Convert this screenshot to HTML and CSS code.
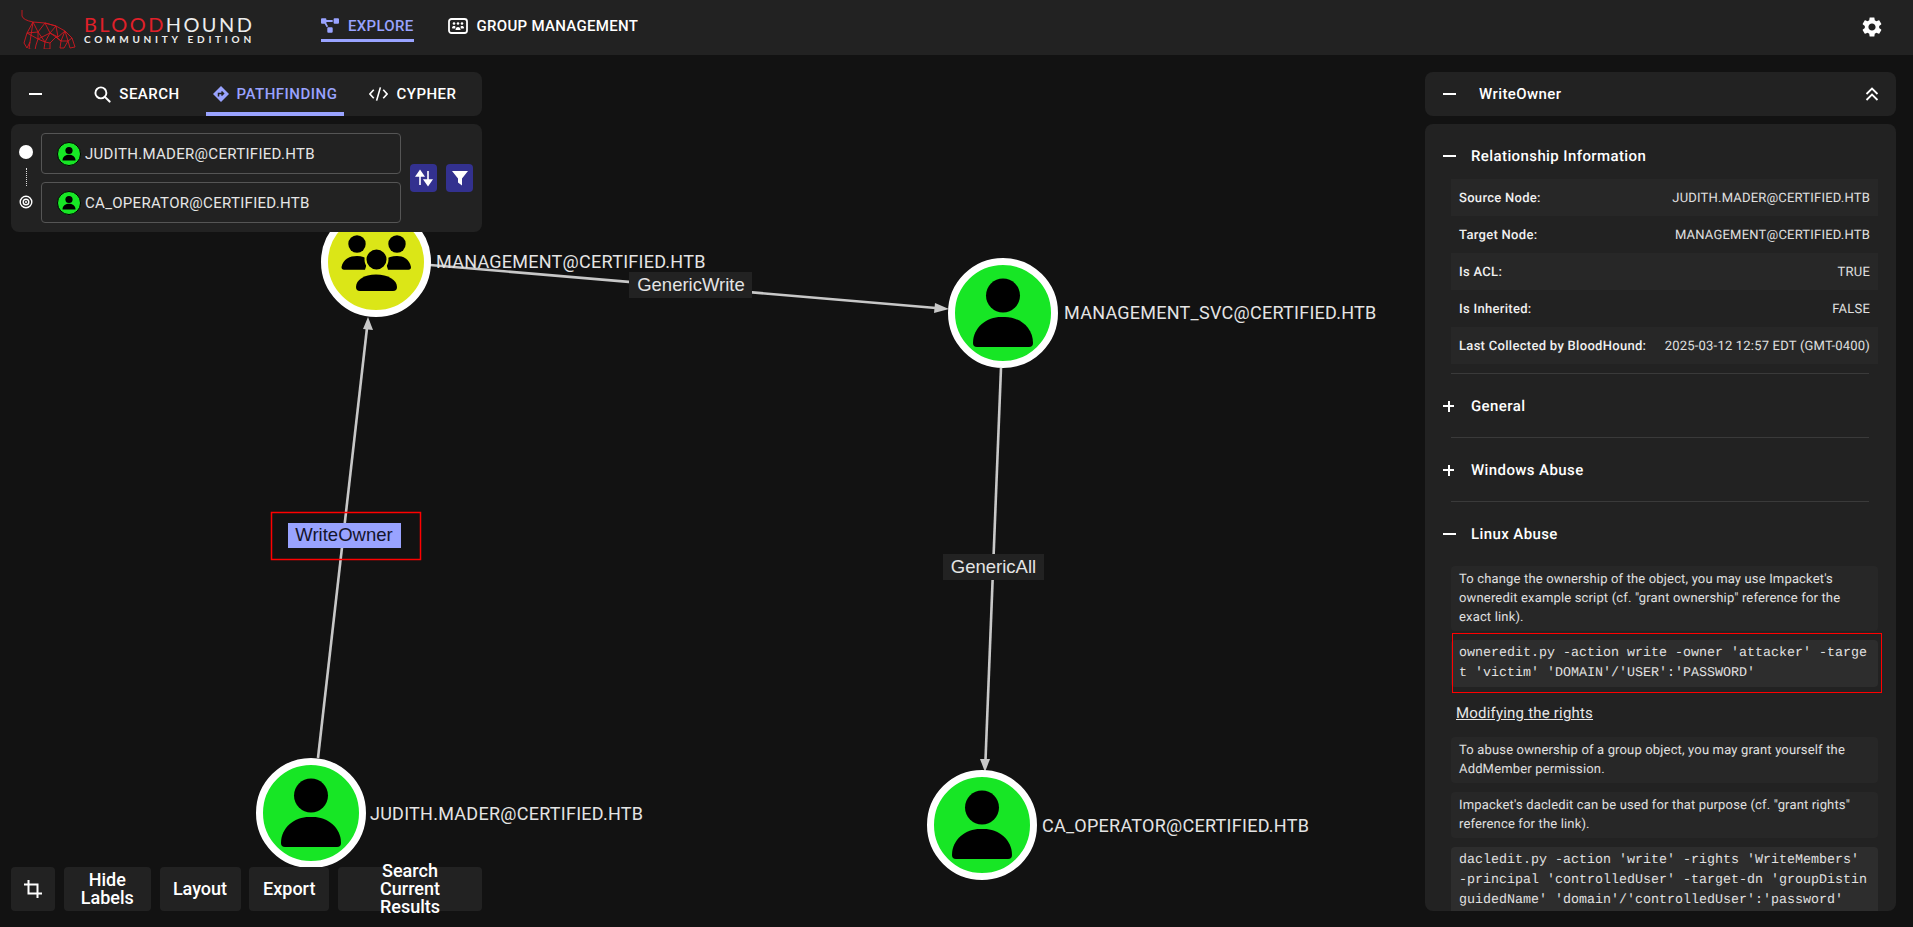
FILE: index.html
```html
<!DOCTYPE html>
<html lang="en">
<head>
<meta charset="utf-8">
<title>BloodHound Community Edition</title>
<link rel="stylesheet" href="styles.css">
</head>
<body>
<div class="app">
  <svg class="graph" viewBox="0 0 1913 927" width="1913" height="927">
    <defs>
      <g id="user">
        <circle cx="0" cy="-17.5" r="17"/>
        <path d="M-30 30C-30 14-16 4-2 4H2C16 4 30 14 30 30Q30 34 26 34H-26Q-30 34-30 30Z"/>
      </g>
      <g id="group">
        <circle cx="-19" cy="-18" r="8.7"/>
        <circle cx="21" cy="-18" r="8.7"/>
        <path d="M-34.500 5C-33 -3-26 -6-19 -6C-14 -6-11 -5-8 -2L-11 7.700H-32Q-34.500 7.700-34.500 5Z"/>
        <path d="M35 5C33.500 -3 27 -6 21 -6C16 -6 12 -5 9 -2L12 7.700H32.500Q35 7.700 35 5Z"/>
        <circle cx="0.500" cy="-2.500" r="11" stroke="#dbe617" stroke-width="2"/>
        <path d="M-20 25C-20 18-12 12.500 0 12.500C12 12.500 21 18 21 25Q21 29 17 29H-16Q-20 29-20 25Z"/>
      </g>
    </defs>
    <g class="edge">
      <line x1="430" y1="265" x2="936" y2="308"/>
      <polygon points="949,309 935,303 934,313"/>
      <line x1="318" y1="758" x2="367" y2="328"/>
      <polygon points="368,317 363,329 373,330"/>
      <line x1="1001" y1="368" x2="985.500" y2="760"/>
      <polygon points="985,772 980,759 990,759"/>
    </g>
    <g class="node-user"><circle cx="1003" cy="313" r="51.500"/><use href="#user" x="1003" y="313"/></g>
    <g class="node-user"><circle cx="311" cy="813" r="51.500"/><use href="#user" x="311" y="813"/></g>
    <g class="node-user"><circle cx="982" cy="825" r="51.500"/><use href="#user" x="982" y="825"/></g>
    <g class="node-group"><circle cx="376" cy="262" r="51.500"/><use href="#group" x="376" y="262"/></g>
    <text class="node-label" x="436" y="268">MANAGEMENT@CERTIFIED.HTB</text>
    <text class="node-label" x="1064" y="319">MANAGEMENT_SVC@CERTIFIED.HTB</text>
    <text class="node-label" x="370" y="820">JUDITH.MADER@CERTIFIED.HTB</text>
    <text class="node-label" x="1042" y="832">CA_OPERATOR@CERTIFIED.HTB</text>
    <rect class="edge-bg" x="629" y="272" width="123" height="26"/>
    <text class="edge-label" x="691" y="291">GenericWrite</text>
    <rect class="edge-bg" x="943" y="554" width="101" height="26"/>
    <text class="edge-label" x="993.500" y="573">GenericAll</text>
    <rect class="edge-bg-selected" x="288" y="523" width="113" height="25"/>
    <text class="edge-label-selected" x="344" y="541">WriteOwner</text>
    <rect class="mark" x="271.500" y="512.500" width="149" height="47"/>
  </svg>

  <header class="nav">
    <div class="brand">
      <svg class="hound" viewBox="0 0 60 40" width="60" height="40">
        <path d="M2 1L2 7Q3 11 13 13L25 14L36 17L45 22L52 29L55 38L50 39L48 32L44 39L40 39L41 32L36 28L30 34L30 40L24 40L25 33L18 30L16 36L15 41L9 40L10 33L7 39L4 34L7 24L13 13L18 23L25 14L30 24L36 17L38 28L45 22L41 32L36 28L30 24L25 33L18 23L7 24M30 24L18 30M30 34L25 33M48 32L52 29M41 32L48 32M13 13L10 33M18 23L18 30M7 24L18 30M30 24L38 28M45 22L48 32M25 14L36 17M36 28L38 28"/>
      </svg>
      <div class="brand-text">
        <div class="brand-title"><span class="brand-red">BLOOD</span>HOUND</div>
        <div class="brand-sub">COMMUNITY EDITION</div>
      </div>
    </div>
    <nav class="nav-links">
      <a class="nav-link active">
        <svg viewBox="0 0 640 512" width="18" height="15"><path fill="currentColor" d="M384 320H256c-17.670 0-32 14.330-32 32v128c0 17.670 14.330 32 32 32h128c17.670 0 32-14.330 32-32V352c0-17.670-14.330-32-32-32zM192 32c0-17.670-14.330-32-32-32H32C14.330 0 0 14.330 0 32v128c0 17.670 14.330 32 32 32h95.720l73.160 128.040C211.980 300.980 232.400 288 256 288h.280L192 175.510V128h224V64H192V32zM608 0H480c-17.670 0-32 14.330-32 32v128c0 17.670 14.330 32 32 32h128c17.670 0 32-14.330 32-32V32c0-17.670-14.330-32-32-32z"/></svg>
        <span>EXPLORE</span>
      </a>
      <a class="nav-link">
        <svg viewBox="0 0 20 16" width="20" height="16"><rect x="1" y="1" width="18" height="14" rx="2.500" fill="none" stroke="currentColor" stroke-width="1.800"/><g fill="currentColor"><circle cx="6" cy="5.500" r="1.300"/><circle cx="10" cy="5.500" r="1.300"/><circle cx="14" cy="5.500" r="1.300"/><path d="M4 10c0-1.500 1-2 2-2s1.500.5 1.500 1L7 10.500H4.500zM16 10c0-1.500-1-2-2-2s-1.500.5-1.500 1l.5 1.500h2.500zM7.500 12c0-2 1-3 2.500-3s2.500 1 2.500 3z"/></g></svg>
        <span>GROUP MANAGEMENT</span>
      </a>
    </nav>
    <button class="settings" aria-label="Settings">
      <svg viewBox="0 0 24 24" width="24" height="24"><path fill="currentColor" d="M19.140 12.940c.04-.3.060-.61.060-.94 0-.32-.02-.64-.07-.94l2.030-1.580c.18-.14.230-.41.120-.61l-1.920-3.320c-.12-.22-.37-.29-.59-.22l-2.390.96c-.5-.38-1.030-.7-1.620-.94l-.36-2.540c-.04-.24-.24-.41-.48-.41h-3.840c-.24 0-.43.170-.47.410l-.36 2.540c-.59.240-1.130.570-1.620.940l-2.390-.96c-.22-.08-.47 0-.59.220L2.740 8.870c-.12.210-.08.470.120.610l2.030 1.580c-.05.300-.09.630-.09.940s.02.640.070.940l-2.030 1.580c-.18.140-.23.410-.12.610l1.920 3.320c.12.220.370.290.590.220l2.390-.96c.5.380 1.030.7 1.620.94l.36 2.540c.05.240.24.410.48.410h3.840c.24 0 .44-.17.470-.41l.36-2.540c.59-.24 1.130-.56 1.620-.94l2.390.96c.22.080.47 0 .59-.22l1.920-3.320c.12-.22.070-.47-.12-.61l-2.010-1.580zM12 15.600c-1.980 0-3.600-1.620-3.600-3.600s1.620-3.600 3.600-3.600 3.600 1.620 3.600 3.600-1.620 3.600-3.600 3.600z"/></svg>
    </button>
  </header>

  <main class="stage">
    <section class="left-col">
      <div class="left-top">
        <div class="panel tabs">
          <span class="tabs-toggle"><span class="minus"></span></span>
          <a class="tab">
            <svg viewBox="0 0 18 18" width="17" height="17"><circle cx="7.300" cy="7.300" r="5.800" fill="none" stroke="currentColor" stroke-width="2"/><path d="M11.500 11.500L16.500 16.500" stroke="currentColor" stroke-width="2.200" stroke-linecap="round"/></svg>
            <span>SEARCH</span>
          </a>
          <a class="tab active">
            <svg viewBox="0 0 16 16" width="16" height="16"><path fill="currentColor" d="M8 0L16 8L8 16L0 8Z"/><path d="M5.500 10.500V7.500H10M8.500 5.500L10.500 7.500L8.500 9.500" fill="none" stroke="#222" stroke-width="1.500"/></svg>
            <span>PATHFINDING</span>
          </a>
          <a class="tab">
            <svg viewBox="0 0 20 16" width="19" height="16"><path d="M5 3.500L1 8L5 12.500M15 3.500L19 8L15 12.500M12 1L8 15" fill="none" stroke="currentColor" stroke-width="1.700"/></svg>
            <span>CYPHER</span>
          </a>
        </div>
        <div class="panel path">
          <div class="path-markers">
            <span class="start-dot"></span>
            <span class="dots"></span>
            <svg viewBox="0 0 14 14" width="14" height="14"><circle cx="7" cy="7" r="5.800" fill="none" stroke="#fff" stroke-width="1.400"/><circle cx="7" cy="7" r="2.800" fill="none" stroke="#fff" stroke-width="1.400"/><circle cx="7" cy="7" r="1" fill="#fff"/></svg>
          </div>
          <div class="path-fields">
            <div class="field">
              <span class="mini-node"><svg viewBox="0 0 24 24" width="24" height="24"><circle cx="12" cy="12" r="11.500" fill="#17e625" stroke="#000" stroke-width="1"/><circle cx="12" cy="8.500" r="3.600"/><path d="M5.500 18.500C5.500 14.500 9 12.800 12 12.800S18.500 14.500 18.500 18.500Z"/></svg></span>
              <span class="field-text">JUDITH.MADER@CERTIFIED.HTB</span>
            </div>
            <div class="field">
              <span class="mini-node"><svg viewBox="0 0 24 24" width="24" height="24"><circle cx="12" cy="12" r="11.500" fill="#17e625" stroke="#000" stroke-width="1"/><circle cx="12" cy="8.500" r="3.600"/><path d="M5.500 18.500C5.500 14.500 9 12.800 12 12.800S18.500 14.500 18.500 18.500Z"/></svg></span>
              <span class="field-text">CA_OPERATOR@CERTIFIED.HTB</span>
            </div>
          </div>
          <div class="path-actions">
            <button class="action" aria-label="Swap">
              <svg viewBox="0 0 18 18" width="18" height="18"><path d="M5 16V3M5 2L1.500 7H8.500ZM13 2V15M13 16L9.500 11H16.500Z" fill="#fff" stroke="#fff" stroke-width="1.600"/></svg>
            </button>
            <button class="action" aria-label="Filter">
              <svg viewBox="0 0 16 16" width="16" height="16"><path fill="#fff" d="M0 1H16L10 8.500V15.500L6 12.500V8.500Z"/></svg>
            </button>
          </div>
        </div>
      </div>
      <div class="toolbar">
        <button class="tool tool-icon" aria-label="Crop">
          <svg viewBox="0 0 18 18" width="18" height="18"><path d="M4.500 0V13.500H18M0 4.500H13.500V18" fill="none" stroke="#fff" stroke-width="2"/></svg>
        </button>
        <button class="tool tool-hide">Hide Labels</button>
        <button class="tool tool-layout">Layout</button>
        <button class="tool tool-export">Export</button>
        <button class="tool tool-search">Search Current Results</button>
      </div>
    </section>

    <aside class="right-col">
      <div class="panel edge-head">
        <span class="minus wide"></span>
        <h2 class="edge-title">WriteOwner</h2>
        <svg class="collapse" viewBox="0 0 14 14" width="14" height="14"><path d="M1.500 7L7 1.500L12.500 7M1.500 13L7 7.500L12.500 13" fill="none" stroke="#fff" stroke-width="1.800"/></svg>
      </div>
      <div class="panel details">
        <section class="sec sec-first">
          <div class="sec-head"><span class="sec-icon"><span class="minus"></span></span><h3>Relationship Information</h3></div>
          <dl class="rows">
            <div class="row"><dt>Source Node:</dt><dd>JUDITH.MADER@CERTIFIED.HTB</dd></div>
            <div class="row"><dt>Target Node:</dt><dd>MANAGEMENT@CERTIFIED.HTB</dd></div>
            <div class="row"><dt>Is ACL:</dt><dd>TRUE</dd></div>
            <div class="row"><dt>Is Inherited:</dt><dd>FALSE</dd></div>
            <div class="row"><dt>Last Collected by BloodHound:</dt><dd>2025-03-12 12:57 EDT (GMT-0400)</dd></div>
          </dl>
        </section>
        <section class="sec">
          <div class="sec-head"><span class="sec-icon"><span class="plus"></span></span><h3>General</h3></div>
        </section>
        <section class="sec">
          <div class="sec-head"><span class="sec-icon"><span class="plus"></span></span><h3>Windows Abuse</h3></div>
        </section>
        <section class="sec sec-open">
          <div class="sec-head"><span class="sec-icon"><span class="minus"></span></span><h3>Linux Abuse</h3></div>
          <div class="abuse">
            <p class="note">To change the ownership of the object, you may use Impacket's owneredit example script (cf. "grant ownership" reference for the exact link).</p>
            <pre class="code marked">owneredit.py -action write -owner 'attacker' -target 'victim' 'DOMAIN'/'USER':'PASSWORD'</pre>
            <h4 class="sub">Modifying the rights</h4>
            <p class="note">To abuse ownership of a group object, you may grant yourself the AddMember permission.</p>
            <p class="note">Impacket's dacledit can be used for that purpose (cf. "grant rights" reference for the link).</p>
            <pre class="code">dacledit.py -action 'write' -rights 'WriteMembers' -principal 'controlledUser' -target-dn 'groupDistinguidedName' 'domain'/'controlledUser':'password'</pre>
          </div>
        </section>
      </div>
    </aside>
  </main>
</div>
</body>
</html>
```
FILE: styles.css
```css
* { box-sizing: border-box; }
html, body { margin: 0; height: 100%; }
body {
  background: #121212;
  color: #fff;
  font-family: Roboto, "Liberation Sans", sans-serif;
  overflow: hidden;
}
button { font: inherit; color: inherit; border: 0; background: none; padding: 0; }
h2, h3, h4, p, dl, dd, pre { margin: 0; }

.app { position: relative; width: 1913px; height: 927px; display: flex; flex-direction: column; }

/* graph canvas */
.graph { position: absolute; left: 0; top: 0; }
.edge line { stroke: #c8c8c8; stroke-width: 2.6; }
.edge polygon { fill: #c8c8c8; }
.node-user circle:first-child { fill: #17e625; stroke: #fff; stroke-width: 7; }
.node-group > circle { fill: #dbe617; stroke: #fff; stroke-width: 7; }
.node-label { fill: #e4e4e4; font: 400 18px Roboto, sans-serif; letter-spacing: .26px; }
.edge-bg { fill: #222; }
.edge-bg-selected { fill: #99a3ff; }
.edge-label { fill: #e4e4e4; font: 400 18.500px "Liberation Sans", sans-serif; text-anchor: middle; }
.edge-label-selected { fill: #14142b; font: 400 18.500px "Liberation Sans", sans-serif; text-anchor: middle; }
.mark { fill: none; stroke: #f00; stroke-width: 1.5; }

/* navigation */
.nav {
  position: relative;
  flex: 0 0 55px;
  display: flex;
  align-items: center;
  background: #222;
  padding-left: 20px;
  padding-right: 29px;
}
.brand { display: flex; align-items: center; width: 301px; gap: 4px; height: 55px; }
.hound { flex: none; margin-top: 3px; }
.hound path { fill: none; stroke: #d01820; stroke-width: .9; stroke-linejoin: round; }
.brand-text { margin-top: 3px; }
.brand-title {
  font: 400 20px/20px Lato, sans-serif;
  letter-spacing: 2.4px;
  color: #ececec;
  white-space: nowrap;
}
.brand-red { color: #e0202a; }
.brand-sub {
  font: 700 10px/11px Lato, sans-serif;
  letter-spacing: 3.75px;
  color: #ececec;
  white-space: nowrap;
}
.nav-links { display: flex; gap: 34px; height: 55px; align-items: stretch; }
.nav-link {
  display: flex;
  align-items: center;
  gap: 9px;
  font-size: 15px;
  font-weight: 500;
  letter-spacing: .3px;
  height: 42px;
  padding-top: 12px;
  border-bottom: 3px solid transparent;
  color: #fff;
}
.nav-link.active { color: #99a3ff; border-bottom-color: #99a3ff; }
.settings { margin-left: auto; display: flex; margin-bottom: 2px; }

/* overlay layout */
.stage {
  position: relative;
  flex: 1;
  min-height: 0;
  display: flex;
  justify-content: space-between;
  padding: 17px 17px 16px 11px;
}
.left-col { width: 471px; display: flex; flex-direction: column; justify-content: space-between; }
.left-top { display: flex; flex-direction: column; gap: 8px; }
.panel { background: #222; border-radius: 8px; }

.tabs { display: flex; height: 44px; }
.tabs-toggle { width: 57px; display: flex; align-items: center; padding-left: 18px; }
.minus { display: block; width: 13px; height: 2px; background: #fff; flex: none; }
.plus {
  display: block; width: 11px; height: 11px; flex: none;
  background:
    linear-gradient(#fff, #fff) center/100% 2px no-repeat,
    linear-gradient(#fff, #fff) center/2px 100% no-repeat;
}
.tab {
  width: 138px;
  display: flex;
  align-items: center;
  justify-content: center;
  gap: 8px;
  font-size: 15px;
  font-weight: 500;
  letter-spacing: .5px;
  border-bottom: 4px solid transparent;
  padding-top: 4px;
}
.tab.active { color: #99a3ff; border-bottom-color: #99a3ff; }

.path { height: 108px; display: flex; align-items: flex-start; padding: 9px 9px 0 0; }
.path-markers {
  width: 30px; flex: none; padding: 12px 0 0 0;
  display: flex; flex-direction: column; align-items: center; gap: 9px;
  height: 90px;
}
.start-dot { width: 14px; height: 14px; border-radius: 50%; background: #fff; flex: none; }
.dots { width: 0; height: 18px; border-left: 1px dotted #ddd; flex: none; }
.path-fields { width: 360px; display: flex; flex-direction: column; gap: 8px; }
.field {
  height: 41px;
  border: 1px solid #555;
  border-radius: 4px;
  display: flex;
  align-items: center;
  gap: 4px;
  padding-left: 15px;
}
.mini-node { display: flex; }
.field-text { font-size: 15px; color: #e6e6e6; letter-spacing: .3px; }
.path-actions { display: flex; gap: 9px; margin-left: 9px; margin-top: 31px; }
.action {
  width: 27px; height: 28px; border-radius: 4px;
  background: #33318f;
  display: flex; align-items: center; justify-content: center;
}

.toolbar { display: flex; height: 44px; justify-content: space-between; }
.tool {
  background: #222;
  border-radius: 4px;
  font-size: 18px;
  font-weight: 500;
  line-height: 18px;
  display: flex;
  align-items: center;
  justify-content: center;
  text-align: center;
  color: #fff;
}
.tool-icon { width: 44px; }
.tool-hide { width: 87px; padding: 0 14px; }
.tool-layout { width: 81px; }
.tool-export { width: 80px; }
.tool-search { width: 144px; padding: 0 24px; }

/* right side */
.right-col { width: 471px; display: flex; flex-direction: column; gap: 8px; min-height: 0; }
.edge-head { flex: 0 0 44px; display: flex; align-items: center; padding: 0 17px 0 18px; }
.edge-title { font-size: 15px; font-weight: 500; margin-left: 23px; letter-spacing: .4px; }
.collapse { margin-left: auto; }
.details { flex: 1; min-height: 0; overflow: hidden; padding: 12px 18px 0 26px; text-rendering: geometricPrecision; }
.sec { border-bottom: 1px solid #3a3a3a; margin-right: 9px; padding-top: 12px; padding-bottom: 11px; }
.sec-first { padding-top: 0; padding-bottom: 9px; }
.sec-open { border-bottom: 0; margin-right: 0; padding-bottom: 0; }
.sec-head { height: 40px; display: flex; align-items: center; margin-left: -8px; }
.sec-icon { width: 28px; flex: none; }
.sec-head h3 { font-size: 15px; font-weight: 500; letter-spacing: .4px; }
.rows { margin-top: 3px; margin-right: -9px; }
.row {
  height: 37px;
  display: flex;
  justify-content: space-between;
  align-items: center;
  padding: 2px 8px 0;
  font-size: 13px;
}
.row:nth-child(odd) { background: #272727; }
.row dt { font-weight: 500; color: #f0f0f0; letter-spacing: .3px; }
.row dd { color: #e0e0e0; letter-spacing: .2px; }

.abuse { margin-top: 12px; display: flex; flex-direction: column; gap: 9px; }
.note {
  background: #272727;
  border-radius: 4px;
  padding: 4px 8px;
  font-size: 13px;
  letter-spacing: .16px;
  line-height: 19px;
  color: #e0e0e0;
}
.code {
  position: relative;
  background: #2d2d2d;
  border-radius: 4px;
  padding: 3.5px 8px 8px;
  font: 400 13.333px/20px "Liberation Mono", monospace;
  color: #e0e0e0;
  white-space: pre-wrap;
  word-break: break-all;
}
.code.marked { padding-bottom: 3.5px; }
.code.marked::after {
  content: "";
  position: absolute;
  inset: -7px -4px -6px 1px;
  border: 1.5px solid #f00;
}
.sub { font-size: 15px; font-weight: 400; letter-spacing: .2px; line-height: 20px; text-decoration: underline; margin: 7px 0 5px 5px; color: #e8e8e8; }
```
